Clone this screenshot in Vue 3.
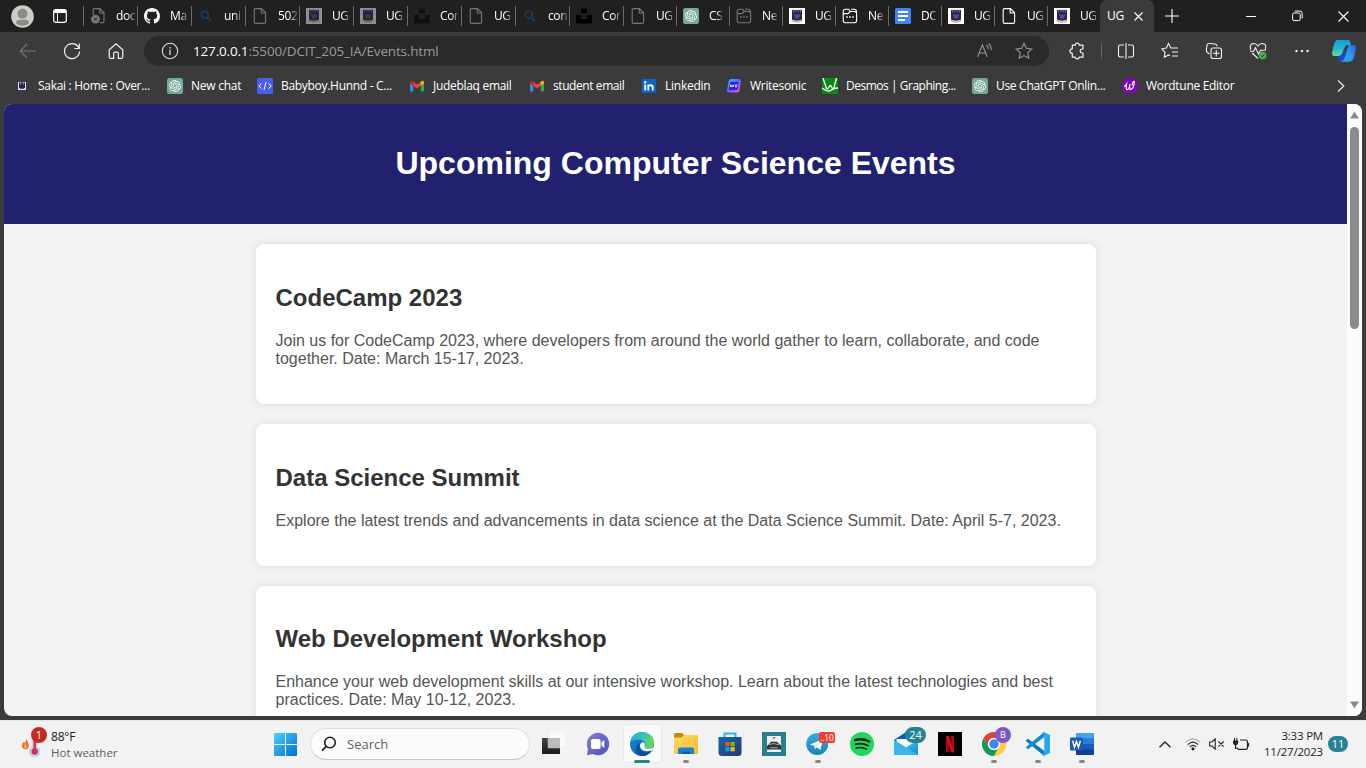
<script setup>
const tabs = [
  { icon: 'docerr', text: 'doc', dim: true },
  { icon: 'github', text: 'Ma' },
  { icon: 'search', text: 'uni' },
  { icon: 'doc', text: '502', dim: true },
  { icon: 'crest', text: 'UG', faded: true },
  { icon: 'crest', text: 'UG', faded: true },
  { icon: 'unsplash', text: 'Cor', faded: true },
  { icon: 'doc', text: 'UG', dim: true },
  { icon: 'search', text: 'con' },
  { icon: 'unsplash', text: 'Cor' },
  { icon: 'doc', text: 'UG', dim: true, narrow: true },
  { icon: 'gpt', text: 'CS', narrow: true },
  { icon: 'window', text: 'Ne', dim: true, narrow: true },
  { icon: 'crest', text: 'UG', narrow: true },
  { icon: 'window', text: 'Ne', narrow: true },
  { icon: 'gdocs', text: 'DC', narrow: true },
  { icon: 'crest', text: 'UG', narrow: true },
  { icon: 'doc', text: 'UG', narrow: true },
  { icon: 'crest', text: 'UG', narrow: true },
]
const bookmarks = [
  { icon: 'crestmini', text: 'Sakai : Home : Over...' },
  { icon: 'gpt', text: 'New chat' },
  { icon: 'code', text: 'Babyboy.Hunnd - C...' },
  { icon: 'gmail', text: 'Judeblaq email' },
  { icon: 'gmail', text: 'student email' },
  { icon: 'linkedin', text: 'Linkedin' },
  { icon: 'writesonic', text: 'Writesonic' },
  { icon: 'desmos', text: 'Desmos | Graphing...' },
  { icon: 'gpt', text: 'Use ChatGPT Onlin...' },
  { icon: 'wordtune', text: 'Wordtune Editor' },
]
const events = [
  { title: 'CodeCamp 2023', text: 'Join us for CodeCamp 2023, where developers from around the world gather to learn, collaborate, and code together. Date: March 15-17, 2023.' },
  { title: 'Data Science Summit', text: 'Explore the latest trends and advancements in data science at the Data Science Summit. Date: April 5-7, 2023.' },
  { title: 'Web Development Workshop', text: 'Enhance your web development skills at our intensive workshop. Learn about the latest technologies and best practices. Date: May 10-12, 2023.' },
]
const apps = [
  { icon: 'taskview' },
  { icon: 'chat' },
  { icon: 'edge', active: true },
  { icon: 'folder', running: true },
  { icon: 'store' },
  { icon: 'photo' },
  { icon: 'telegram', running: true, badge: '..10', kind: 'red' },
  { icon: 'spotify' },
  { icon: 'mail', badge: '24', kind: 'teal' },
  { icon: 'netflix' },
  { icon: 'chrome', running: true, badge: 'B', kind: 'purple' },
  { icon: 'vscode', running: true },
  { icon: 'word', running: true },
]
</script>

<template>
  <div class="screen">
    <svg class="defs" width="0" height="0" aria-hidden="true">
      <defs>
        <linearGradient id="g-win" x1="0" y1="0" x2="1" y2="1"><stop offset="0" stop-color="#4cd0fb" /><stop offset="1" stop-color="#0070d0" /></linearGradient>
        <linearGradient id="g-chat" x1="0" y1="0" x2="1" y2="1"><stop offset="0" stop-color="#8a7fd0" /><stop offset="1" stop-color="#4a50c4" /></linearGradient>
        <linearGradient id="g-edge1" x1="0" y1="0" x2="1" y2=".3"><stop offset="0" stop-color="#2aa7e4" /><stop offset=".6" stop-color="#36c6b8" /><stop offset="1" stop-color="#63d951" /></linearGradient>
        <linearGradient id="g-edge2" x1="0" y1="0" x2="1" y2="1"><stop offset="0" stop-color="#1b8fd9" /><stop offset="1" stop-color="#0c4f9c" /></linearGradient>
        <linearGradient id="g-folder" x1="0" y1="0" x2="1" y2="1"><stop offset="0" stop-color="#ffdc69" /><stop offset="1" stop-color="#f9b929" /></linearGradient>
        <linearGradient id="g-store" x1="0" y1="0" x2="1" y2="1"><stop offset="0" stop-color="#1467b5" /><stop offset="1" stop-color="#253a66" /></linearGradient>
        <linearGradient id="g-tg" x1="0" y1="0" x2="0" y2="1"><stop offset="0" stop-color="#37aee2" /><stop offset="1" stop-color="#1584bd" /></linearGradient>
        <linearGradient id="g-mail" x1="0" y1="0" x2="1" y2="1"><stop offset="0" stop-color="#3ccbf4" /><stop offset="1" stop-color="#1590dc" /></linearGradient>
        <linearGradient id="g-dark" x1="0" y1="0" x2="0" y2="1"><stop offset="0" stop-color="#444543" /><stop offset="1" stop-color="#1c1c1b" /></linearGradient>
        <linearGradient id="g-cop1" x1="0" y1="0" x2="0" y2="1"><stop offset="0" stop-color="#129ede" /><stop offset=".5" stop-color="#22b6cf" /><stop offset="1" stop-color="#66df91" /></linearGradient>
        <linearGradient id="g-cop2" x1="1" y1="0" x2="0" y2="1"><stop offset="0" stop-color="#1a5fdb" /><stop offset=".5" stop-color="#3194f0" /><stop offset="1" stop-color="#16b9f1" /></linearGradient>
        <linearGradient id="g-ws" x1="0" y1="0" x2="1" y2="1"><stop offset="0" stop-color="#16c8ff" /><stop offset=".5" stop-color="#6a5cff" /><stop offset="1" stop-color="#ff58c8" /></linearGradient>
      </defs>

      <symbol id="doc" viewBox="0 0 16 16"><path d="M3.2 .6H9.5L13.6 4.8V14Q13.6 15.4 12.2 15.4H3.6Q2.2 15.4 2.2 14V2Q2.2 .6 3.6 .6M9.2 .8V5H13.4" fill="none" stroke="currentColor" stroke-width="1.1" /></symbol>
      <symbol id="docerr" viewBox="0 0 16 16"><path d="M3.2 7V2Q3.2 .6 4.6 .6H10L14 4.8V13.2Q14 14.6 12.6 14.6H10M9.8 .8V5H13.8" fill="none" stroke="currentColor" stroke-width="1.1" /><circle cx="5.5" cy="11.2" r="4.4" fill="currentColor" /><path d="M4 9.7L7 12.7M7 9.7L4 12.7" stroke="#202020" stroke-width="1" /></symbol>
      <symbol id="github" viewBox="0 0 16 16"><path fill="#fff" d="M8 0C3.58 0 0 3.58 0 8c0 3.54 2.29 6.53 5.47 7.59.4.07.55-.17.55-.38 0-.19-.01-.82-.01-1.49-2.01.37-2.53-.49-2.69-.94-.09-.23-.48-.94-.82-1.13-.28-.15-.68-.52-.01-.53.63-.01 1.08.58 1.23.82.72 1.21 1.87.87 2.33.66.07-.52.28-.87.51-1.07-1.78-.2-3.64-.89-3.64-3.95 0-.87.31-1.59.82-2.15-.08-.2-.36-1.02.08-2.12 0 0 .67-.21 2.2.82.64-.18 1.32-.27 2-.27s1.36.09 2 .27c1.53-1.04 2.2-.82 2.2-.82.44 1.1.16 1.92.08 2.12.51.56.82 1.27.82 2.15 0 3.07-1.87 3.75-3.65 3.95.29.25.54.73.54 1.48 0 1.07-.01 1.93-.01 2.2 0 .21.15.46.55.38A8.01 8.01 0 0 0 16 8c0-4.42-3.58-8-8-8z" /></symbol>
      <symbol id="search" viewBox="0 0 16 16"><circle cx="6.8" cy="6.8" r="3.5" fill="none" stroke="#173f63" stroke-width="1.6" /><path d="M9.4 9.4L13 13" stroke="#173f63" stroke-width="2" /></symbol>
      <symbol id="crest" viewBox="0 0 16 16"><path fill="#fff" d="M0 0H16V16H0z" /><path d="M3 2H13V11.3Q12.6 12.6 8 12.8Q3.4 12.6 3 11.3z" fill="#2b2358" /><path d="M4.7 1.5V4.5M7 1.5V4M9.2 1.5V4M11.4 1.5V4.5" stroke="#8b7390" stroke-width=".9" /><path d="M5 6.5H11V8.5H10V10.5H6V8.5H5z" fill="#5a4a86" /><path d="M2.5 12Q3.5 14 8 14Q12.5 14 13.5 12" fill="none" stroke="#cfae86" stroke-width="1.3" /></symbol>
      <symbol id="crestmini" viewBox="0 0 16 16"><path d="M4 4H12V12H4z" fill="#e8e4ea" /><path d="M5 4.5H11V9.5L10 10.8H6L5 9.5z" fill="#292052" /><path d="M6.5 5V7M9.5 5V7" stroke="#837097" /></symbol>
      <symbol id="unsplash" viewBox="0 0 16 16"><path fill="#000" d="M5 .5H11V5H5zM0 7H5V11H11V7H16V15.5H0z" /></symbol>
      <symbol id="gpt" viewBox="0 0 24 24"><rect width="24" height="24" rx="3.3" fill="#75a99c" /><path transform="translate(3 3) scale(.75)" fill="#fff" d="M22.28 9.82a5.98 5.98 0 0 0-.52-4.91 6.05 6.05 0 0 0-6.51-2.9A6.07 6.07 0 0 0 4.98 4.18a5.98 5.98 0 0 0-4 2.9 6.05 6.05 0 0 0 .74 7.1 5.98 5.98 0 0 0 .51 4.91 6.05 6.05 0 0 0 6.52 2.9A5.98 5.98 0 0 0 13.26 24a6.06 6.06 0 0 0 5.77-4.21 5.99 5.99 0 0 0 4-2.9 6.06 6.06 0 0 0-.75-7.07zm-9.02 12.61a4.48 4.48 0 0 1-2.88-1.04l.14-.08 4.78-2.76a.8.8 0 0 0 .39-.68v-6.74l2.02 1.17a.07.07 0 0 1 .04.05v5.58a4.5 4.5 0 0 1-4.49 4.5zM3.6 18.3a4.47 4.47 0 0 1-.54-3.01l.14.09 4.78 2.76a.77.77 0 0 0 .78 0l5.84-3.37v2.33a.08.08 0 0 1-.03.06L9.74 19.95a4.5 4.5 0 0 1-6.14-1.65zM2.34 7.9a4.49 4.49 0 0 1 2.37-1.98v5.69a.77.77 0 0 0 .39.67l5.81 3.36-2.02 1.16a.08.08 0 0 1-.07 0l-4.83-2.78A4.5 4.5 0 0 1 2.34 7.87zm16.6 3.85l-5.84-3.38L15.12 7.2a.08.08 0 0 1 .07 0l4.83 2.79a4.49 4.49 0 0 1-.68 8.1v-5.67a.79.79 0 0 0-.4-.67zm2.01-3.02l-.14-.09-4.77-2.78a.78.78 0 0 0-.79 0L9.41 9.23V6.9a.07.07 0 0 1 .03-.06l4.83-2.79a4.5 4.5 0 0 1 6.68 4.66zM8.31 12.86l-2.02-1.16a.08.08 0 0 1-.04-.06V6.07a4.5 4.5 0 0 1 7.37-3.45l-.14.08L8.7 5.46a.8.8 0 0 0-.39.68zm1.1-2.36l2.6-1.5 2.6 1.5v3l-2.6 1.5-2.6-1.5z" /></symbol>
      <symbol id="window" viewBox="0 0 16 16"><path d="M3.5 1.2H6.7L8.3 3.5H12.5Q14.6 3.5 14.6 5.6V12.6Q14.6 14.7 12.5 14.7H3.3Q1.2 14.7 1.2 12.6V3.4Q1.2 1.2 3.5 1.2M1.4 5.6H6L8.3 3.5M9 1.2H12.3Q14.4 1.2 14.6 4" fill="none" stroke="currentColor" stroke-width="1.1" /><path d="M4.2 9H5.8M7.2 9H8.8M10.2 9H11.8" stroke="currentColor" stroke-width="1.5" /></symbol>
      <symbol id="gdocs" viewBox="0 0 16 16"><rect width="16" height="16" rx="1.6" fill="#4385f4" /><path d="M3 4H13M3 8H13M3 12H10" stroke="#fff" stroke-width="1.9" /></symbol>
      <symbol id="code" viewBox="0 0 16 16"><rect width="16" height="16" rx="1.5" fill="#4b5cf0" /><path d="M4.5 5.5L1.7 8L4.5 10.5M11.5 5.5L14.3 8L11.5 10.5M9 4L7 12" fill="none" stroke="#fff" /></symbol>
      <symbol id="gmail" viewBox="0 0 16 16"><path fill="#4285f4" d="M1 4.5L4.3 7V13.5H2.2Q1 13.5 1 12.3z" /><path fill="#34a853" d="M15 4.5L11.7 7V13.5H13.8Q15 13.5 15 12.3z" /><path fill="#ea4335" d="M4.3 3.7L8 6.5L11.7 3.7V7.8L8 10.6L4.3 7.8z" /><path fill="#c5221f" d="M1 4.5Q1 2.6 2.8 2.8L4.3 3.7V7.8L1 5.3z" /><path fill="#fbbc04" d="M15 4.5Q15 2.6 13.2 2.8L11.7 3.7V7.8L15 5.3z" /></symbol>
      <symbol id="linkedin" viewBox="0 0 16 16"><rect x="1" y="1" width="14" height="14" rx="1" fill="#0a66c2" /><path d="M4.2 6.5V12.5M7.3 6.5V12.5M7.3 9.2Q7.4 7.2 9.4 7.2Q11.7 7.2 11.7 9.6V12.5" fill="none" stroke="#fff" stroke-width="1.8" /><circle cx="4.2" cy="4.3" r="1.2" fill="#fff" /></symbol>
      <symbol id="writesonic" viewBox="0 0 16 16"><path d="M5 1H13Q15 1 15 3L13.5 12.5Q13 14.6 11 14.6H2.8Q.8 14.6 1 12.6L2.7 3Q3 1 5 1" fill="url(#g-ws)" /><path d="M4.2 4H12.6L11.5 12H2.7z" fill="#2a1ff0" /><path d="M4.3 6.6L4.8 9L6.2 7.2L6.8 9L8 6.6M11.5 6.9H9.4L10.7 8.8H8.8" fill="none" stroke="#fff" stroke-width=".9" /></symbol>
      <symbol id="desmos" viewBox="0 0 16 16"><path fill="#078b13" d="M0 0H16V16H0z" /><path d="M1 0L4.5 10.5Q5.5 12 7 9Q8.3 6 9.5 9Q11 12 12 9.5L14.5 0M0 10Q6 14.8 9 12.3Q12 10 16 10" fill="none" stroke="#fff" stroke-width="1.3" /></symbol>
      <symbol id="wordtune" viewBox="0 0 16 16"><circle cx="8" cy="8" r="8" fill="#8206b9" /><path d="M2.7 8.3L4.6 6Q3.6 11.7 5.2 11.7Q7.3 11.4 8 6Q7 11.4 8.6 11.5Q11.7 11 12.4 3.8Q11 2.5 10.2 7" fill="none" stroke="#fff" stroke-width="1.2" stroke-linecap="round" /></symbol>

      <symbol id="taskview" viewBox="0 0 24 24"><path d="M0 6H18V22H0z" fill="url(#g-dark)" /><path d="M6 0H24V16H6z" fill="#fafafa" stroke="#ddd" stroke-width=".4" /><path d="M6 6H18V16H6z" fill="#bcbcbc" /></symbol>
      <symbol id="chat" viewBox="0 0 24 24"><path d="M12 .8A11.2 11.2 0 1 1 7 22L.8 23.3L2 17A11.2 11.2 0 0 1 12 .8" fill="url(#g-chat)" /><rect x="5" y="7" width="9.6" height="10" rx="1.8" fill="#fff" /><path d="M15.5 10.5L18.3 8V16L15.5 13.5z" fill="#fff" /></symbol>
      <symbol id="edge" viewBox="0 0 24 24"><circle cx="12" cy="12" r="12" fill="url(#g-edge2)" /><path d="M.2 10.5C1.3 4 6.3 0 12 0C19 0 24 5.2 24 11C24 14.8 21 17 18.2 17C15.8 17 14 16 14.8 14.7C16 13 15.7 10 12.5 8.5C8 6.5 2.2 7.8 .2 10.5" fill="url(#g-edge1)" /><path d="M9.6 11C7.8 18 14.5 23.4 21.5 19.3C18.4 23.5 14 24.5 10.5 23.8C4.8 22 5 14 9.6 11" fill="#104d98" /><path d="M10.2 12.5Q11.5 9.4 14.4 10.7Q15.7 12.5 14.6 14.6Q14.2 17 18.2 17Q21.5 16.8 24 14.5L22 18.5Q13.5 21 10.5 16Q9.7 14.2 10.2 12.5" fill="#f7f9fb" /></symbol>
      <symbol id="folder" viewBox="0 0 24 24"><path d="M0 2.5Q0 1 1.5 1H8L11 4H9L7 6.5H0z" fill="#c78a07" /><path d="M0 5.5H8L10 3H22.5Q24 3 24 4.5V20.5Q24 22 22.5 22H1.5Q0 22 0 20.5z" fill="url(#g-folder)" /><path d="M4 22V17.5Q4 15.5 6 15.5H18Q20 15.5 20 17.5V22z" fill="#1781d9" /><path d="M8 22V19.5H16V22" fill="#0e5aa8" /></symbol>
      <symbol id="store" viewBox="0 0 24 24"><path d="M6.5 6V1.5H17.5V6" fill="none" stroke="#22b7ed" stroke-width="2" /><path d="M.5 5H23.5V20.5Q23.5 24 20 24H4Q.5 24 .5 20.5z" fill="url(#g-store)" /><path d="M7.3 10H11.5V14.2H7.3z" fill="#f25022" /><path d="M12.5 10H16.7V14.2H12.5z" fill="#7fba00" /><path d="M7.3 15.1H11.5V19.3H7.3z" fill="#00a4ef" /><path d="M12.5 15.1H16.7V19.3H12.5z" fill="#ffb900" /></symbol>
      <symbol id="photo" viewBox="0 0 24 24"><path fill="#268090" d="M0 0H24V24H0z" /><path fill="#efefee" d="M5 4H19V20H5z" /><path d="M5 17.5V14L7.5 11.5L9 9.8H15L17 12L19 13.5V17.5z" fill="#303333" /><path d="M6.5 12.5Q12 10.5 17 12.8M8 15.8H16" fill="none" stroke="#aaa" stroke-width="1" /><path d="M10.8 5.8H13.2" stroke="#b54b55" stroke-width="1.5" /></symbol>
      <symbol id="telegram" viewBox="0 0 24 24"><circle cx="11.2" cy="12" r="11" fill="url(#g-tg)" /><path d="M4 12.4L16.8 7.2L14.5 18L10.8 15.2L8.8 17.3L8.4 14z" fill="#fff" /><path d="M8.4 14L14.8 9.4L9.5 15L8.8 17.3z" fill="#b9d8e9" /></symbol>
      <symbol id="spotify" viewBox="0 0 24 24"><circle cx="12" cy="12" r="12" fill="#1ed760" /><g fill="none" stroke="#101c14" stroke-linecap="round"><path d="M5 8.2Q12.5 5.8 19.2 9.5" stroke-width="2.3" /><path d="M5.6 12.3Q12 10.4 17.8 13.5" stroke-width="1.9" /><path d="M6.2 16Q11.7 14.5 16.5 17.1" stroke-width="1.6" /></g></symbol>
      <symbol id="mail" viewBox="0 0 24 24"><path d="M0 8L12 0L24 8V12H0z" fill="#0a61a9" /><path d="M2.5 7H21V18H2.5z" fill="#fff" /><path d="M0 8L12 15.5L24 8V23H0z" fill="url(#g-mail)" /><path d="M0 8L24 23H0z" fill="#3ab6ea" /></symbol>
      <symbol id="netflix" viewBox="0 0 24 24"><path fill="#000" d="M0 0H24V24H0z" /><path d="M8 4H10.8V20L8 20.4zM13.2 4H16V20.4L13.2 20z" fill="#b20710" /><path d="M8 4H10.8L16 20.4L13.1 20z" fill="#e50914" /></symbol>
      <symbol id="chrome" viewBox="0 0 24 24"><path d="M1.6 6A12 12 0 0 1 22.4 6H12A6 6 0 0 0 6.8 15z" fill="#dc4437" /><path d="M1.6 6A12 12 0 0 0 12 24L17.2 15A6 6 0 0 1 6.8 15z" fill="#109d58" /><path d="M22.4 6A12 12 0 0 1 12 24L17.2 15A6 6 0 0 0 12 6z" fill="#ffcd41" /><circle cx="12" cy="12" r="6" fill="#fff" /><circle cx="12" cy="12" r="4.7" fill="#3f85f4" /></symbol>
      <symbol id="vscode" viewBox="0 0 24 24"><path d="M0 8.3L2 6.8L18.3 19V24L0 9z" fill="#0879be" /><path d="M0 15.5L2 17.2L18.3 5V0L0 15z" fill="#0c8bd1" /><path d="M17.6 0L24 3V21L17.6 24L16.5 23.4L18.3 20V4L16.5 .6z" fill="#28a8ec" /></symbol>
      <symbol id="word" viewBox="0 0 24 24"><rect x="6" y="1" width="18" height="22" rx="1.5" fill="#185abd" /><path d="M6 2.5Q6 1 7.5 1H22.5Q24 1 24 2.5V6.5H6z" fill="#41a5ee" /><path d="M6 6.5H24V12H6z" fill="#2b7cd3" /><path d="M6 17.5H24V21.5Q24 23 22.5 23H7.5Q6 23 6 21.5z" fill="#103f91" /><rect y="5.5" width="13" height="13" rx="1.2" fill="#185abd" /><path d="M2.7 8.7L4.5 15.3L6.5 9.5L8.5 15.3L10.3 8.7" fill="none" stroke="#fff" stroke-width="1.5" /></symbol>
    </svg>

    <header class="tabbar">
      <div class="profile">
        <svg width="23" height="23" viewBox="0 0 23 23"><circle cx="11.5" cy="11.5" r="11.3" fill="#cfcdca" /><circle cx="11.5" cy="8.8" r="5" fill="#8e8a86" /><path d="M5 18.5Q5 14.8 8 14.8H15Q18 14.8 18 18.5Q11.5 23 5 18.5" fill="#8e8a86" /></svg>
      </div>
      <svg class="tabmenu" width="14" height="14" viewBox="0 0 14 14"><rect x=".7" y=".7" width="12.6" height="12.6" rx="2" fill="none" stroke="#fff" stroke-width="1.2" /><path d="M1 1H13V4H1z" fill="#fff" /><path d="M4.5 4V13" stroke="#fff" /></svg>
      <div v-for="(t, i) in tabs" :key="i" class="tab" :class="{ narrow: t.narrow }">
        <svg class="i16" :class="{ dim: t.dim, faded: t.faded }"><use :href="'#' + t.icon" /></svg>
        <span>{{ t.text }}</span>
      </div>
      <div class="tab active"><span>UG</span><svg width="9" height="9" viewBox="0 0 9 9"><path d="M.5 .5L8.5 8.5M8.5 .5L.5 8.5" stroke="#fff" stroke-width="1.1" /></svg></div>
      <svg class="newtab" width="14" height="14" viewBox="0 0 14 14"><path d="M7 0V14M0 7H14" stroke="#fff" stroke-width="1.1" /></svg>
      <div class="winctl">
        <svg width="10" height="12" viewBox="0 0 10 12"><path d="M0 6.5H10" stroke="#fff" /></svg>
        <svg width="11" height="12" viewBox="0 0 11 12"><rect x=".6" y="3" width="7.6" height="7.6" rx="1.5" fill="none" stroke="#fff" /><path d="M2.7 1.1H8Q10.2 1.1 10.2 3.3V8.5" fill="none" stroke="#fff" /></svg>
        <svg width="11" height="11" viewBox="0 0 11 11"><path d="M.5 .5L10.5 10.5M10.5 .5L.5 10.5" stroke="#fff" stroke-width="1.1" /></svg>
      </div>
    </header>

    <nav class="toolbar">
      <div class="slot"><svg width="18" height="18" viewBox="0 0 18 18"><path d="M17 9H1.5M8 2L1.2 9L8 16" fill="none" stroke="#777" stroke-width="1.1" /></svg></div>
      <div class="slot"><svg width="18" height="18" viewBox="0 0 18 18"><path d="M16.2 7A7.5 7.5 0 1 0 16.5 9.5M16.3 1.5V6.5H11.3" fill="none" stroke="#f2f2f2" stroke-width="1.2" /></svg></div>
      <div class="slot"><svg width="18" height="18" viewBox="0 0 18 18"><path d="M2.2 7.8L9 1.7L15.8 7.8V14.8Q15.8 16.3 14.5 16.3H11.3V11.5Q11.3 10.2 10 10.2H8Q6.7 10.2 6.7 11.5V16.3H3.5Q2.2 16.3 2.2 14.8z" fill="none" stroke="#f2f2f2" stroke-width="1.2" /></svg></div>
      <div class="address">
        <svg width="18" height="18" viewBox="0 0 18 18"><circle cx="9" cy="9" r="7.7" fill="none" stroke="#ddd" stroke-width="1.1" /><path d="M9 7.8V13M9 5V6.5" stroke="#ddd" stroke-width="1.3" /></svg>
        <span class="url"><b>127.0.0.1</b>:5500/DCIT_205_IA/Events.html</span>
        <svg class="read" width="18" height="18" viewBox="0 0 18 18"><path d="M1.5 15L6.4 3L11.3 15M3.3 11H9.5M10.5 3Q12.3 4.7 12 7.2M12.7 1.5Q15.8 4.5 15.1 8.2" fill="none" stroke="#969696" stroke-width="1.1" /></svg>
        <svg width="18" height="18" viewBox="0 0 18 18"><path d="M9 1.3L11.3 6.2L16.8 7L12.8 10.8L13.8 16.3L9 13.6L4.2 16.3L5.2 10.8L1.2 7L6.7 6.2z" fill="none" stroke="#969696" stroke-width="1.1" /></svg>
      </div>
      <div class="slot first"><svg width="18" height="18" viewBox="0 0 18 18"><path d="M4.3 3.2H7.3Q7.3 1.2 9.3 1.2Q11.2 1.2 11.2 3.2H15V7H13.9Q12.2 7.2 12.2 9Q12.2 10.7 13.9 11H15V15.2H11.2Q11.2 16.8 9.3 16.8Q7.3 16.8 7.3 15.2H4.3V11.3Q2 11.3 2 9Q2 6.8 4.3 6.8z" fill="none" stroke="#f2f2f2" stroke-width="1.2" stroke-linejoin="round" /></svg></div>
      <i class="rule"></i>
      <div class="slot"><svg width="18" height="18" viewBox="0 0 18 18"><path d="M7 3H3.2Q1.5 3 1.5 4.7V13.3Q1.5 15 3.2 15H7M11 3H14.8Q16.5 3 16.5 4.7V13.3Q16.5 15 14.8 15H11M9 1V17" fill="none" stroke="#f2f2f2" stroke-width="1.1" /></svg></div>
      <div class="slot"><svg width="18" height="18" viewBox="0 0 18 18"><path d="M12 6H9.8L7.5 1.5L5.3 6L.8 6.8L4 10.3L3.3 15.3L7.5 13L9 13.8M10.7 6H17M11 10H17M11 14H17" fill="none" stroke="#f2f2f2" stroke-width="1.1" /></svg></div>
      <div class="slot"><svg width="18" height="18" viewBox="0 0 18 18"><rect x="6" y="6" width="10.5" height="10.5" rx="2" fill="none" stroke="#f2f2f2" stroke-width="1.1" /><path d="M11.25 8V14.5M8 11.25H14.5M4.5 12L2.3 10.5Q1.2 9.5 1.4 8L2 3.3Q2.5 1.4 4.4 1.5L10 2Q12 2.2 12 4.3" fill="none" stroke="#f2f2f2" stroke-width="1.1" /></svg></div>
      <div class="slot"><svg width="18" height="18" viewBox="0 0 18 18"><path d="M1.7 8Q0 1.7 4.6 1.5Q7.5 1.5 9 4Q10.5 1.5 13.4 1.5Q18 1.7 16.3 8M3 11L9 16.5M1 9.2H4.7L6.5 5.8L9.5 12L11.5 8.2H16.5" fill="none" stroke="#f2f2f2" stroke-width="1.1" /><circle cx="13.6" cy="13.6" r="3.8" fill="#4caf50" /><path d="M12 13.5L13.2 14.8L15.4 12.5" fill="none" stroke="#143e18" /></svg></div>
      <div class="slot"><svg width="18" height="18" viewBox="0 0 18 18"><g fill="#f2f2f2"><circle cx="3.5" cy="9" r="1.2" /><circle cx="9" cy="9" r="1.2" /><circle cx="14.5" cy="9" r="1.2" /></g></svg></div>
      <svg class="copilot" width="24" height="22" viewBox="0 0 24 22"><path d="M13 0H17Q19 1 18 5H21.5Q24.5 5.3 23.8 8.5L22 17Q20.8 21.7 17 21.7H8Q13 20 14 13L17 4Q16 0 13 0" fill="url(#g-cop2)" /><path d="M5 0H15Q18 0 18.8 5H15Q13 5 11.5 11Q10 16 7 16H2Q-1 16 .6 10Q2.2 1 5 0" fill="url(#g-cop1)" /><path d="M6 16Q9 16 10.5 12.5L12 8L13.5 13L12.5 17Q11.2 22 8.3 21.7Q6 21.5 6 16" fill="#174bc8" /></svg>
    </nav>

    <nav class="bookmarks">
      <a v-for="(b, i) in bookmarks" :key="i"><svg class="i16"><use :href="'#' + b.icon" /></svg><span :class="'bm' + i">{{ b.text }}</span></a>
      <svg class="more" width="8" height="12" viewBox="0 0 8 12"><path d="M1 .5L6.8 6L1 11.5" fill="none" stroke="#eee" stroke-width="1.2" /></svg>
    </nav>

    <div class="viewport">
      <main class="page">
        <div class="hero"><h1>Upcoming Computer Science Events</h1></div>
        <section v-for="e in events" :key="e.title" class="card">
          <h2>{{ e.title }}</h2>
          <p>{{ e.text }}</p>
        </section>
      </main>
      <div class="scroll">
        <svg width="9" height="8" viewBox="0 0 9 8"><path d="M4.5 .7L9 7.5H0z" fill="#8a8a8a" /></svg>
        <i></i>
        <svg class="down" width="9" height="8" viewBox="0 0 9 8"><path d="M4.5 7.3L9 .5H0z" fill="#8a8a8a" /></svg>
      </div>
    </div>

    <footer class="taskbar">
      <div class="weather">
        <svg width="28" height="30" viewBox="0 0 28 30"><path d="M4 10Q4.5 13 2.5 14Q1.5 12.5 .5 14.5Q-1.5 20 3.5 20.3Q7.3 20 6.8 15.5Q6 12 4 10" fill="#f46c38" /><path d="M3.5 14.5Q1 18 3.5 19.5Q5.5 18.5 3.5 14.5" fill="#ffc33d" /><rect x="9.5" y="7" width="6.5" height="20" rx="3.2" fill="#c5dcf2" /><circle cx="12.7" cy="22.7" r="5.8" fill="#b9d9f3" /><path d="M12.7 9V22" stroke="#dc3851" stroke-width="2.6" /><circle cx="12.7" cy="22.5" r="3.2" fill="#d82c52" /></svg>
        <em>1</em>
        <div><strong>88°F</strong><span>Hot weather</span></div>
      </div>
      <svg class="start" width="23" height="23" viewBox="0 0 23 23"><path d="M1 0H11V11H0V1Q0 0 1 0M12 0H22Q23 0 23 1V11H12zM0 12H11V23H1Q0 23 0 22zM12 12H23V22Q23 23 22 23H12z" fill="url(#g-win)" /></svg>
      <div class="searchbox">
        <svg width="16" height="16" viewBox="0 0 16 16"><circle cx="9" cy="6.5" r="5.3" fill="none" stroke="#222" stroke-width="1.6" /><path d="M5.2 10.3L1 14.7" stroke="#222" stroke-width="1.8" /></svg>
        <span>Search</span>
      </div>
      <div class="apps">
        <div v-for="a in apps" :key="a.icon" class="app" :class="{ active: a.active, running: a.running }">
          <svg width="24" height="24"><use :href="'#' + a.icon" /></svg>
          <em v-if="a.badge" :class="a.kind">{{ a.badge }}</em>
        </div>
      </div>
      <div class="tray">
        <svg width="12" height="7" viewBox="0 0 12 7"><path d="M.5 6.3L6 1L11.5 6.3" fill="none" stroke="#222" stroke-width="1.3" /></svg>
        <svg class="wifi" width="16" height="13" viewBox="0 0 16 13"><g fill="none" stroke-width="1.2"><path d="M.7 4.3Q8-2.3 15.3 4.3" stroke="#bbb" /><path d="M2.8 6.7Q8 1.5 13.2 6.7M4.8 8.9Q8 5.7 11.2 8.9" stroke="#222" /></g><circle cx="8" cy="10.8" r="1.6" fill="#222" /></svg>
        <svg class="vol" width="16" height="12" viewBox="0 0 16 12"><path d="M.6 4H3L6.2 .9V11.1L3 8H.6zM9.5 3.5L14.7 8.7M14.7 3.5L9.5 8.7" fill="none" stroke="#222" stroke-width="1.1" /></svg>
        <svg class="bat" width="17" height="13" viewBox="0 0 17 13"><path d="M7 2H12.5Q14.5 2 14.5 4V9.3Q14.5 11.4 12.5 11.4H6Q4 11.4 4 9.5M2.6 6V11M15.5 5V8.5" fill="none" stroke="#222" stroke-width="1.2" /><path d="M0 2.5H5.2V4.7Q5.2 7 2.6 7Q0 7 0 4.7z" fill="#222" /><path d="M1.5 0V3M3.9 0V3" stroke="#222" /></svg>
        <div class="clock"><span>3:33 PM</span><span>11/27/2023</span></div>
        <em>11</em>
      </div>
    </footer>
  </div>
</template>

<style>
body { margin: 0; overflow: hidden; }
</style>
<style scoped>
* { box-sizing: border-box; }
.screen { width: 1366px; height: 768px; display: flex; flex-direction: column; background: #3b3b3b; font-family: "Open Sans", "Noto Sans", sans-serif; font-size: 12px; color: #fff; overflow: hidden; }
.defs { position: absolute; }
svg { flex: none; display: block; }
.i16 { width: 16px; height: 16px; }
.tabbar { height: 32px; flex: none; display: flex; align-items: center; background: #202020; }
.profile { width: 53px; padding-left: 10.5px; }
.tabmenu { margin-right: 16px; }
.tab { width: 54px; height: 32px; flex: none; display: flex; align-items: center; position: relative; padding-left: 7px; }
.tab::before { content: ""; position: absolute; left: 0; top: 6px; width: 1px; height: 20px; background: #6b6b6b; }
.tab.narrow { width: 53px; }
.tab span { margin-left: 10px; white-space: nowrap; letter-spacing: -.4px; line-height: 18px; -webkit-mask-image: linear-gradient(90deg, #000 60%, rgba(0, 0, 0, .25)); mask-image: linear-gradient(90deg, #000 60%, rgba(0, 0, 0, .25)); }
.tab .dim { color: #777; }
.tab .faded { opacity: .5; }
.tab.active { background: #3b3b3b; border-radius: 7px 7px 0 0; padding-left: 7px; }
.tab.active::before { display: none; }
.tab.active span { margin-left: 0; width: 18px; margin-right: 9px; letter-spacing: -.3px; mask-image: none; -webkit-mask-image: none; }
.newtab { margin-left: 11px; }
.winctl { display: flex; align-items: center; margin-left: 67px; gap: 35.5px; }
.toolbar { height: 38px; flex: none; display: flex; align-items: center; padding-left: 6px; }
.slot { width: 44px; flex: none; display: flex; justify-content: center; }
.slot.first { margin-left: 6px; }
.rule { width: 1px; height: 16px; background: #666; margin: 0 2px; }
.address { width: 905px; height: 30px; margin-left: 6px; border-radius: 15px; background: #2a2a2a; display: flex; align-items: center; padding: 0 16px 0 17px; flex: none; }
.url { margin-left: 14px; font-size: 13.5px; letter-spacing: -.17px; color: #9a9a9a; line-height: 20px; white-space: nowrap; }
.url b { font-weight: 400; color: #fff; }
.read { margin-left: auto; margin-right: 21px; }
.copilot { margin-left: 8px; }
.bookmarks { height: 34px; flex: none; display: grid; grid-template-columns: 153px 90px 152px 120px 112px 85px 96px 150px 150px 1fr auto; align-items: center; padding: 0 21px 2px 14px; }
.bookmarks a { display: flex; gap: 8px; align-items: center; white-space: nowrap; line-height: 18px; letter-spacing: -.3px; }
.bookmarks .bm1, .bookmarks .bm5 { letter-spacing: -.25px; }
.bookmarks .bm4 { letter-spacing: -.42px; }
.bookmarks .bm7 { letter-spacing: -.48px; }
.viewport { width: 1358px; height: 612px; flex: none; margin-left: 4px; display: flex; border-radius: 8px; overflow: hidden; background: #f3f3f3; }
.page { width: 1343px; overflow: hidden; font-family: "Liberation Sans", Arial, sans-serif; font-size: 16px; }
.hero { height: 120px; background: #222170; text-align: center; padding: 20px; margin-bottom: 20px; display: flow-root; }
h1 { font-size: 32px; margin: 21.44px 0; line-height: 37px; }
.card { width: 840px; margin: 0 auto 20px; padding: 20px; background: #fff; border-radius: 8px; box-shadow: 0 0 10px rgba(0, 0, 0, .1); }
h2 { margin: 19.74px 0 20.1px; font-size: 24px; line-height: 28px; color: #333; }
p { margin: 16px 0; line-height: 18px; color: #555; }
.scroll { width: 15px; background: #fcfcfc; display: flex; flex-direction: column; align-items: center; padding-top: 7px; }
.scroll i { width: 9px; height: 202px; margin-top: 8px; border-radius: 5px; background: #8b8b8b; }
.scroll .down { margin-top: auto; margin-bottom: 7px; }
.taskbar { height: 48px; margin-top: 4px; flex: none; background: #f2f2f2; display: flex; align-items: center; color: #222; box-shadow: inset 0 1px #e4e4e4; }
.weather { width: 274px; padding-left: 22px; display: flex; align-items: center; position: relative; flex: none; }
.weather > em { position: absolute; left: 31px; top: -1px; width: 16px; height: 16px; border-radius: 50%; background: #c42b1c; color: #fff; font-style: normal; line-height: 16px; text-align: center; font-size: 11px; }
.weather div { display: flex; flex-direction: column; margin-left: 1px; line-height: 16px; letter-spacing: -.2px; padding-top: 1px; }
.weather strong { font-weight: 400; }
.weather div span { color: #5e5e5e; font-size: 11.5px; letter-spacing: 0; }
.searchbox { width: 220px; height: 32px; margin-left: 13px; border-radius: 16px; border: 1px solid #dedede; border-bottom-color: #c8c8c8; background: #fbfbfb; display: flex; align-items: center; padding-left: 10px; gap: 10px; color: #5f5f5f; font-size: 13px; flex: none; }
.apps { display: flex; margin-left: 2px; }
.app { width: 44px; height: 40px; display: flex; align-items: center; justify-content: center; position: relative; flex: none; }
.app.active::before { content: ""; position: absolute; inset: 0 2.5px 1px; background: #fafafa; border: 1px solid #e8e8e8; border-radius: 4px; }
.app svg { position: relative; }
.app.running::after, .app.active::after { content: ""; position: absolute; bottom: 1px; left: 19px; width: 6px; height: 3px; border-radius: 2px; background: #888; }
.app.active::after { left: 14px; width: 16px; background: #268394; }
.app em { position: absolute; font-style: normal; color: #fff; text-align: center; }
.app .red { left: 23px; top: 8px; width: 16px; height: 11px; line-height: 11px; border-radius: 2px; background: #f23c34; font-size: 8.5px; letter-spacing: -.2px; }
.app .teal { left: 21px; top: 3px; width: 21px; height: 16px; line-height: 16px; border-radius: 8px; background: #268394; font-size: 11px; }
.app .purple { left: 23px; top: 3px; width: 16px; height: 16px; line-height: 16px; border-radius: 8px; background: #7e57c2; font-size: 9px; }
.tray { display: flex; align-items: center; margin-left: 55px; }
.wifi { margin-left: 14px; }
.vol { margin-left: 8px; }
.bat { margin-left: 8px; }
.clock { width: 73px; display: flex; flex-direction: column; align-items: flex-end; line-height: 16px; letter-spacing: -.2px; font-size: 11.5px; }
.tray em { width: 20px; height: 16px; border-radius: 8px; margin-left: 5px; background: #268394; color: #fff; font-style: normal; text-align: center; line-height: 16px; font-size: 11px; }
</style>
